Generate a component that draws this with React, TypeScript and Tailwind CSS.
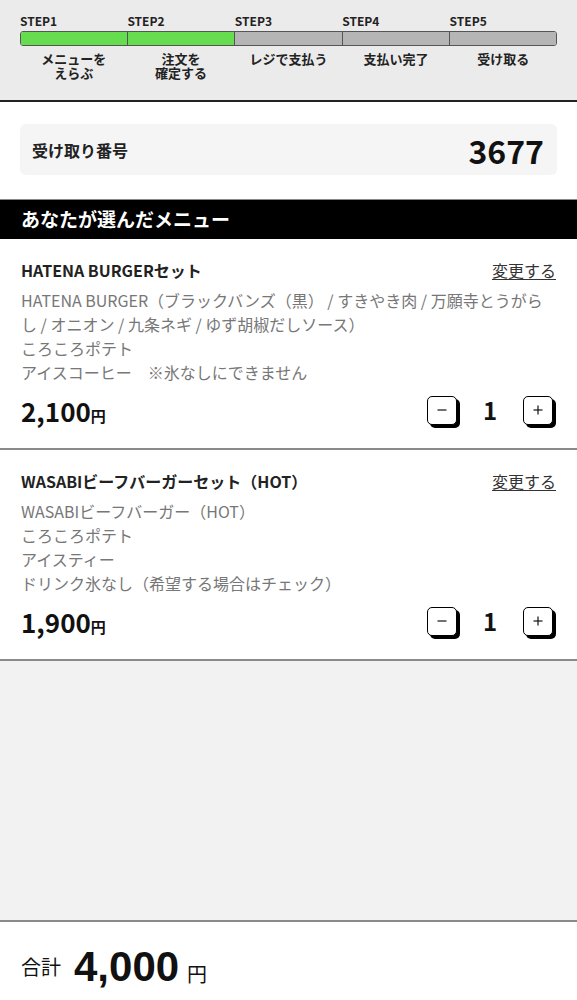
import React from 'react';

type Item = {
  id: string;
  name: string;
  details: string[];
  price: string;
  qty: number;
};

const steps = [
  { label: 'STEP1', text: ['メニューを', 'えらぶ'], done: true },
  { label: 'STEP2', text: ['注文を', '確定する'], done: true },
  { label: 'STEP3', text: ['レジで支払う'], done: false },
  { label: 'STEP4', text: ['支払い完了'], done: false },
  { label: 'STEP5', text: ['受け取る'], done: false },
];

const items: Item[] = [
  {
    id: 'hatena',
    name: 'HATENA BURGERセット',
    details: [
      'HATENA BURGER（ブラックバンズ（黒） / すきやき肉 / 万願寺とうがらし / オニオン / 九条ネギ / ゆず胡椒だしソース）',
      'ころころポテト',
      'アイスコーヒー　※氷なしにできません',
    ],
    price: '2,100',
    qty: 1,
  },
  {
    id: 'wasabi',
    name: 'WASABIビーフバーガーセット（HOT）',
    details: [
      'WASABIビーフバーガー（HOT）',
      'ころころポテト',
      'アイスティー',
      'ドリンク氷なし（希望する場合はチェック）',
    ],
    price: '1,900',
    qty: 1,
  },
];

const QtyButton = ({ kind }: { kind: 'minus' | 'plus' }) => (
  <button className="w-[30px] h-[29px] flex items-center justify-center bg-white border-[1.5px] border-black rounded-[5px] shadow-[3px_3px_0_#000]">
    <svg width="14" height="14" viewBox="0 0 14 14" fill="none" stroke="#111" strokeWidth="1.2">
      <line x1="2.5" y1="7" x2="11.5" y2="7" />
      {kind === 'plus' && <line x1="7" y1="2.5" x2="7" y2="11.5" />}
    </svg>
  </button>
);

const StepHeader = () => (
  <header className="bg-[#ebebeb] border-b-2 border-[#222] px-[20px] pt-[13px] pb-[20px]">
    <div className="grid grid-cols-5 text-[12px] font-bold leading-[16px] text-[#222]">
      {steps.map((s) => (
        <span key={s.label}>{s.label}</span>
      ))}
    </div>
    <div className="mt-[2px] flex h-[15px] rounded-[3px] border border-[#555] overflow-hidden">
      {steps.map((s, i) => (
        <div
          key={s.label}
          className={`flex-1 ${i > 0 ? 'border-l border-[#555]' : ''} ${s.done ? 'bg-[#66dd4f]' : 'bg-[#b5b5b5]'}`}
        />
      ))}
    </div>
    <div className="mt-[6px] grid grid-cols-5 text-center text-[13px] font-bold leading-[14px] text-[#222]">
      {steps.map((s) => (
        <div key={s.label}>
          {s.text.map((t) => (
            <div key={t}>{t}</div>
          ))}
        </div>
      ))}
    </div>
  </header>
);

const MenuRow = ({ item }: { item: Item }) => (
  <div className="px-[21px] pt-[20px] pb-[20px] border-b-2 border-[#8a8a8a]">
    <div className="flex items-center justify-between leading-[22px]">
      <h3 className="text-[16px] font-bold text-[#222]">{item.name}</h3>
      <a className="text-[16px] text-[#333] underline underline-offset-2">変更する</a>
    </div>
    <div className="mt-[7px] text-[16px] leading-[24px] text-[#777]">
      {item.details.map((d) => (
        <p key={d}>{d}</p>
      ))}
    </div>
    <div className="mt-[8px] flex items-center justify-between h-[36px]">
      <p className="font-bold text-[#111]">
        <span className="text-[26px]">{item.price}</span>
        <span className="text-[15px]">円</span>
      </p>
      <div className="flex items-center mr-[3px]">
        <QtyButton kind="minus" />
        <span className="w-[66px] text-center text-[24px] font-bold text-[#111]">{item.qty}</span>
        <QtyButton kind="plus" />
      </div>
    </div>
  </div>
);

export default function App() {
  return (
    <div className="w-[577px] h-[1000px] flex flex-col bg-white font-['Noto_Sans_CJK_JP',sans-serif]">
      <StepHeader />

      {/* 受け取り番号 */}
      <div className="px-[20px] pt-[22px] pb-[24px]">
        <div className="h-[51px] rounded-md bg-[#f5f5f5] flex items-center justify-between pl-[12px] pr-[13px]">
          <span className="text-[16px] font-bold text-[#222]">受け取り番号</span>
          <span className="text-[32px] font-bold text-[#111] leading-none">3677</span>
        </div>
      </div>

      <div className="h-[40px] bg-black border-t border-[#888] px-[21px] flex items-center text-white text-[19px] font-bold">
        あなたが選んだメニュー
      </div>

      {items.map((item) => (
        <MenuRow key={item.id} item={item} />
      ))}

      <div className="flex-1 bg-[#f2f2f2]" />

      <footer className="h-[80px] border-t-2 border-[#8a8a8a] px-[21px] flex items-center pt-[12px] text-[#111]">
        <span className="text-[20px] mr-[13px]">合計</span>
        <span className="font-['Liberation_Sans',sans-serif] font-bold text-[42px] leading-none">4,000</span>
        <span className="text-[20px] ml-[8px] self-end mb-[11px]">円</span>
      </footer>
    </div>
  );
}
